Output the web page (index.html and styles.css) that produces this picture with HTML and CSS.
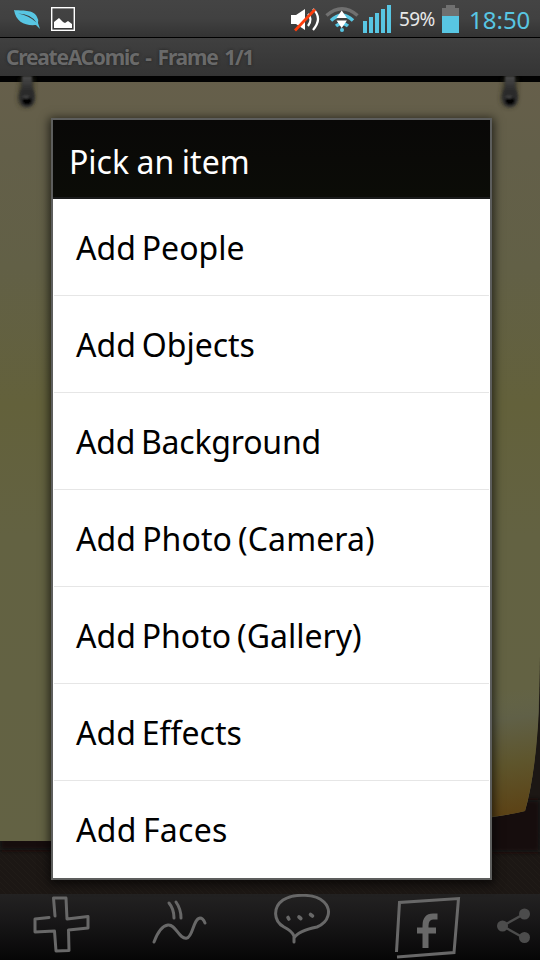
FILE: index.html
```html
<!DOCTYPE html>
<html lang="en">
<head>
<meta charset="utf-8">
<title>CreateAComic</title>
<link rel="stylesheet" href="styles.css">
</head>
<body>
<div class="screen">
  <header class="status">
    <svg class="notes" width="80" height="37" viewBox="0 0 80 37">
      <path d="M14 10 C21 11 34 9 37 17 Q39 20 38 23 L40 29 L36 25 C25 26 16 22 14 10Z" fill="#58c6e3"/>
      <path d="M18 13.500Q31 14 36.500 22.500Q29 15.500 18 13.500Z" fill="#3b3b3b"/>
      <rect x="51.700" y="7.700" width="22.600" height="22.600" fill="none" stroke="#fff" stroke-width="1.400"/>
      <path d="M54 28v-6l5-4 4 4 2 1 3-2 4 3v4z" fill="#fff"/>
    </svg>
    <div class="indicators">
      <svg width="104" height="37" viewBox="290 0 104 37">
        <path d="M291 15h5l9-6v21l-9-6h-5z" fill="#fff"/>
        <path d="M308 14q5 5 0 12M313 9q10 9 0 21" fill="none" stroke="#fff" stroke-width="2.200"/>
        <path d="M295 30.500L315 9.500" stroke="#ff3d0c" stroke-width="2.800"/>
        <path d="M326.500 15.500Q342 2 357.500 15.500" fill="none" stroke="#707070" stroke-width="3.500"/>
        <path d="M331 20.500Q342 10 353 20.500M336 26q6-5 12 0" fill="none" stroke="#58c6e3" stroke-width="3.500"/>
        <circle cx="342" cy="30" r="2" fill="#58c6e3"/>
        <path d="M336.500 18l5.200-7.500 5.200 7.500zM336.500 20.500h10.400l-5.200 7.500z" fill="#fff"/>
        <path d="M363 21h4v12h-4zM369 17h4v16h-4zM375 13h4v20h-4zM381 9h4v24h-4zM387 5h4v28h-4z" fill="#58c6e3"/>
      </svg>
      <span class="percent">59%</span>
      <svg class="battery" width="17" height="37" viewBox="0 0 17 37">
        <path d="M0 8h4V5h9v3h4v9H0z" fill="#707070"/><path d="M0 16h17v17H0z" fill="#58c6e3"/>
      </svg>
      <span class="clock">18:50</span>
    </div>
  </header>
  <div class="titlebar"><span>CreateAComic - Frame 1/1</span></div>
  <main class="stage">
    <svg class="paper" width="540" height="818" viewBox="0 76 540 818">
      <defs>
        <linearGradient id="page" x1="0" y1="0" x2="0" y2="1">
          <stop offset="0" stop-color="#665f4b"/><stop offset=".1" stop-color="#635f49"/>
          <stop offset=".25" stop-color="#626046"/><stop offset=".43" stop-color="#63613b"/>
          <stop offset=".6" stop-color="#636242"/><stop offset="1" stop-color="#636244"/>
        </linearGradient>
        <linearGradient id="curl" gradientUnits="userSpaceOnUse" x1="490" y1="690" x2="510" y2="815">
          <stop offset="0" stop-color="#63654a" stop-opacity="0"/><stop offset=".25" stop-color="#606047"/>
          <stop offset=".6" stop-color="#5e552c"/><stop offset="1" stop-color="#5c4215"/>
        </linearGradient>
        <linearGradient id="clip" x1="0" y1="0" x2="0" y2="1">
          <stop offset="0" stop-color="#4a4a4a"/><stop offset=".5" stop-color="#292929"/><stop offset="1" stop-color="#343434"/>
        </linearGradient>
        <pattern id="weave" width="6" height="6" patternUnits="userSpaceOnUse">
          <path d="M0 0L6 6" stroke="#251f1a" stroke-width="1"/>
        </pattern>
        <filter id="soft" x="-50%" y="-50%" width="200%" height="200%"><feGaussianBlur stdDeviation="2.500"/></filter>
        <filter id="haze" x="-50%" y="-50%" width="200%" height="200%"><feGaussianBlur stdDeviation=".8"/></filter>
        <g id="hook">
          <path d="M-6 77h13v21q0 9-8 9t-8-9z" fill="#2b291f" filter="url(#soft)" opacity=".7"/>
          <g filter="url(#haze)">
            <path d="M-5 76H5V87Q8 92 8 98Q7 107 0 107T-8 98Q-8 92-5 87Z" fill="url(#clip)"/>
            <ellipse cx="0" cy="101" rx="5" ry="4" fill="#050505"/>
            <ellipse cx="-1" cy="97" rx="3" ry="1.500" fill="#434343"/>
          </g>
        </g>
      </defs>
      <path d="M0 76h540v818H0z" fill="#1c1714"/>
      <path d="M0 830h540v64H0z" fill="url(#weave)" opacity=".5"/>
      <path d="M0 838h540v12H0zM490 800h50v52h-50z" fill="#120f0c" filter="url(#soft)"/>
      <path d="M0 76H540V655Q539 764 525 811Q505 816 470 820L240 841H0Z" fill="url(#page)"/>
      <path d="M480 690H539.500Q538 764 525 811Q505 816 480 818Z" fill="url(#curl)"/>
      <path d="M0 76h540v6H0z" fill="#020202"/>
      <use href="#hook" x="27"/><use href="#hook" x="510"/>
    </svg>
    <section class="dialog">
      <h1>Pick an item</h1>
      <ul>
        <li>Add People</li>
        <li>Add Objects</li>
        <li class="snug">Add Background</li>
        <li class="airy">Add Photo (Camera)</li>
        <li>Add Photo (Gallery)</li>
        <li>Add Effects</li>
        <li class="wide">Add Faces</li>
      </ul>
    </section>
  </main>
  <footer class="toolbar">
    <svg width="540" height="66" viewBox="0 894 540 66" fill="none" stroke="#686868" stroke-width="3" stroke-linecap="round" stroke-linejoin="round">
      <path d="M55 916L53.500 898H66L67 919L88 916.500V928L68.500 930L69 950.500L56 951L54.500 931L35 932V919L49 917.500"/>
      <path d="M154 942Q160 926 168 925C176 924 179 940 187 938C193 937 193 919 200 918Q203 918 205 923M169 903Q174 909 174 918M176 902Q181 909 181 918"/>
      <path d="M294 942V936Q292 931 284 927C273 921 273 907 283 900C295 893 316 894 324 902C332 910 329 922 317 927Q298 931 294 938"/>
      <path d="M288 917.500l.8 1.500M299 917l1.800 1.500M310.500 914.500l2 1.500" stroke-width="3.600"/>
      <path d="M396.500 952L399.500 902.500L458.500 898.500L454 952.500L397 957" stroke-linecap="butt" stroke-linejoin="miter"/>
      <path d="M425.500 948V926Q425.500 916.500 433 916.500H437.500M417 930.500H436" stroke-width="6" stroke-linecap="butt"/>
      <g stroke="#4c4c4c" stroke-width="2.500"><path d="M524 914L502.500 926L524 938"/><g fill="#4c4c4c" stroke="none"><circle cx="524.500" cy="914" r="5.500"/><circle cx="502.500" cy="926" r="5.500"/><circle cx="524.500" cy="937.500" r="5.500"/></g></g>
    </svg>
  </footer>
</div>
</body>
</html>
```
FILE: styles.css
```css
* { box-sizing: border-box; }
body { margin: 0; background: #000; font-family: "Noto Sans", sans-serif; }
svg { display: block; }
.screen { width: 540px; height: 960px; display: grid; grid-template-rows: 38px 38px 818px 66px; overflow: hidden; }
.status { display: flex; justify-content: space-between; background: linear-gradient(#444, #414141 50%, #333); border-bottom: 1px solid #000; }
.indicators { display: flex; width: 250px; line-height: 37px; white-space: nowrap; }
.percent { width: 48px; padding-left: 5px; color: #e8e8e8; font-size: 19px; line-height: 38px; letter-spacing: -.6px; }
.clock { padding-left: 10px; color: #58c6e3; font-size: 24px; line-height: 39px; }
.titlebar { padding-left: 6px; background: linear-gradient(#404040, #343434); color: #6a6a6a; font-size: 21px; font-weight: 700; line-height: 38px; letter-spacing: -1.25px; word-spacing: 2.6px; white-space: nowrap; text-shadow: 0 0 3px #222; }
.stage { display: grid; }
.paper, .dialog { grid-area: 1 / 1; }
.dialog { z-index: 1; width: 441px; height: 762px; margin: 42px 0 0 51px; border: 2px solid #5d5e5d; background: #fff; box-shadow: 0 2px 9px 2px rgba(0, 0, 0, .65); }
.dialog h1 { height: 79px; margin: 0; padding-left: 16px; background: linear-gradient(#090807, #0b0c07); border-bottom: 2px solid #1a1b1b; color: #fff; font-size: 32px; font-weight: 400; line-height: 84px; word-spacing: -.8px; }
.dialog ul { list-style: none; margin: 0; padding: 0 1px; }
.dialog li { height: 97px; padding-left: 22px; border-bottom: 1px solid #e6e6e6; color: #000; font-size: 32px; line-height: 97px; word-spacing: -2.4px; white-space: nowrap; }
.dialog .snug { letter-spacing: -.2px; }
.dialog .airy { letter-spacing: .1px; }
.dialog .wide { letter-spacing: .3px; }
.dialog li:last-child { border: 0; }
.toolbar { background: linear-gradient(#232222, #171617 45%, #060606); }
```
